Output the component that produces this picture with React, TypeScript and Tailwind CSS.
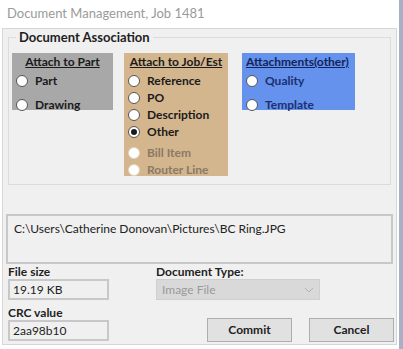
import React from "react";

type RadioProps = {
  label: string;
  checked?: boolean;
  disabled?: boolean;
  textClass?: string;
};

function Radio({ label, checked, disabled, textClass }: RadioProps) {
  return (
    <div className="flex items-center gap-[7px] h-[17px]">
      <span
        className={`w-[12px] h-[12px] shrink-0 rounded-full bg-white flex items-center justify-center border ${
          disabled ? "border-[#e2d4c0]" : "border-[#555]"
        }`}
      >
        {checked && <span className="w-[6px] h-[6px] rounded-full bg-[#1a1a1a]" />}
      </span>
      <span className={`text-[12px] font-bold whitespace-nowrap ${disabled ? "text-[#8a7a66]" : textClass ?? "text-[#1a1a1a]"}`}>
        {label}
      </span>
    </div>
  );
}

function Field({ label, value }: { label: string; value: string }) {
  return (
    <div className="flex flex-col">
      <span className="text-[12px] font-bold text-[#222] leading-[14px]">{label}</span>
      <div className="w-[101px] h-[21px] border-2 border-[#c8c8c8] flex items-center px-[3px] text-[12px] text-[#222]">
        {value}
      </div>
    </div>
  );
}

export default function App() {
  return (
    <div
      className="w-[403px] h-[349px] bg-white flex overflow-hidden"
      style={{ fontFamily: 'Lato, "Noto Sans", sans-serif' }}
    >
      <div className="flex-1 flex flex-col">
        <div className="h-[28px] flex items-center pl-[7px] text-[13px] text-[#9a9a9a]">
          Document Management, Job 1481
        </div>
        <div className="ml-[2px] mr-[2px] mb-[4px] flex-1 bg-[#f0f0f0] border border-[#d6d6d6] px-[5px] flex flex-col">
          <fieldset className="mt-[1px] border border-[#dcdcdc] h-[155px] px-[3px] pt-[9px]">
            <legend className="ml-[4px] px-[3px] text-[13px] font-bold text-[#1e1e1e] leading-[14px]">
              Document Association
            </legend>
            <div className="flex items-start">
              <div className="w-[101px] h-[57px] bg-[#a8a8a8] flex flex-col px-[4px]">
                <div className="text-center text-[12px] font-bold underline text-[#1a1a1a] leading-[15px] mt-[1px]">
                  Attach to Part
                </div>
                <div className="flex flex-col gap-[7px] mt-[3px]">
                  <Radio label="Part" />
                  <Radio label="Drawing" />
                </div>
              </div>
              <div className="ml-[11px] w-[104px] h-[123px] bg-[#d3b58e] flex flex-col px-[4px]">
                <div className="text-center text-[12px] font-bold underline text-[#1a1a1a] leading-[15px] mt-[1px] whitespace-nowrap">
                  Attach to Job/Est
                </div>
                <div className="flex flex-col mt-[3px]">
                  <Radio label="Reference" />
                  <Radio label="PO" />
                  <Radio label="Description" />
                  <Radio label="Other" checked />
                  <div className="h-[4px]" />
                  <Radio label="Bill Item" disabled />
                  <Radio label="Router Line" disabled />
                </div>
              </div>
              <div className="ml-[14px] w-[113px] h-[57px] bg-[#6492ec] flex flex-col px-[4px]">
                <div className="text-[12px] font-bold underline text-[#14245a] leading-[15px] mt-[1px]">
                  Attachments(other)
                </div>
                <div className="flex flex-col gap-[7px] mt-[3px]">
                  <Radio label="Quality" textClass="text-[#1c2f6e]" />
                  <Radio label="Template" textClass="text-[#1c2f6e]" />
                </div>
              </div>
            </div>
          </fieldset>
          <div className="mt-[29px] -mx-[2px] h-[50px] border-2 border-[#c8c8c8] px-[6px] pt-[4px] text-[12px] text-[#222]">
            C:\Users\Catherine Donovan\Pictures\BC Ring.JPG
          </div>
          <div className="mt-[1px] flex flex-1">
            <div className="flex flex-col gap-[6px]">
              <Field label="File size" value="19.19 KB" />
              <Field label="CRC value" value="2aa98b10" />
            </div>
            <div className="ml-[47px] flex flex-col flex-1">
              <span className="text-[12px] font-bold text-[#222] leading-[14px]">Document Type:</span>
              <div className="w-[164px] h-[21px] bg-[#d9d9d9] border border-[#cfcfcf] flex items-center justify-between px-[5px] text-[12px] text-[#9a9a9a]">
                <span>Image File</span>
                <svg width="10" height="6" viewBox="0 0 10 6" fill="none">
                  <path d="M1 1l4 4 4-4" stroke="#b0b0b0" strokeWidth="1" />
                </svg>
              </div>
              <div className="mt-auto mb-[2px] flex justify-end gap-[17px] -mr-[3px]">
                <button className="w-[85px] h-[24px] bg-[#e1e1e1] border border-[#adadad] text-[12px] font-bold text-[#222]">
                  Commit
                </button>
                <button className="w-[85px] h-[24px] bg-[#e1e1e1] border border-[#adadad] text-[12px] font-bold text-[#222]">
                  Cancel
                </button>
              </div>
            </div>
          </div>
        </div>
      </div>
      <div className="w-[4px] bg-[#a7b0c4]" />
    </div>
  );
}
